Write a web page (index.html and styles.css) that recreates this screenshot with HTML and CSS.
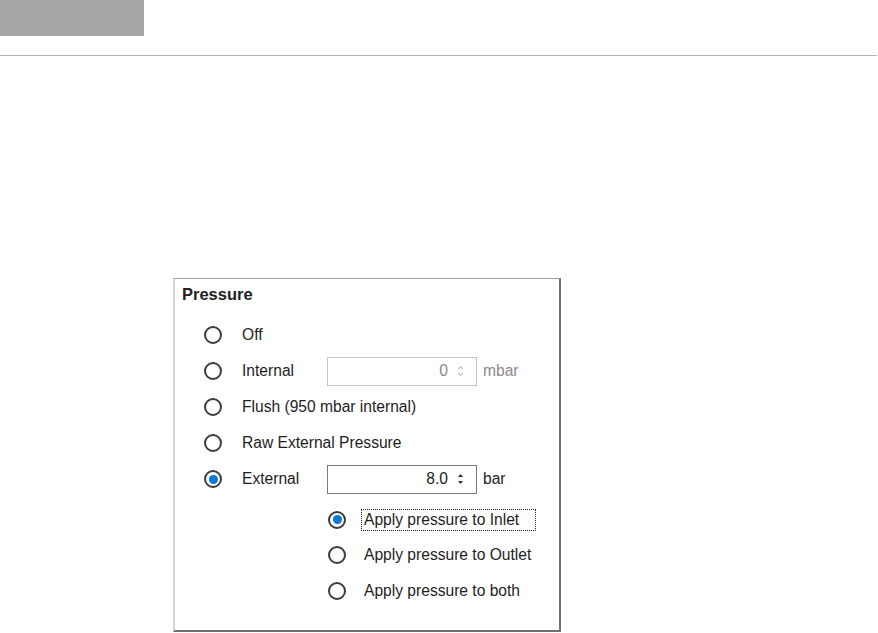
FILE: index.html
```html
<!DOCTYPE html>
<html>
<head>
<meta charset="utf-8">
<link rel="stylesheet" href="styles.css">
</head>
<body>
<div class="topbar"></div>
<div class="rule"></div>
<div class="panel">
  <div class="title">Pressure</div>
  <div class="row">
    <span class="radio"></span><span class="label">Off</span>
  </div>
  <div class="row">
    <span class="radio"></span><span class="label">Internal</span>
    <span class="spin disabled"><span class="val">0</span><span class="arrows"><svg width="7" height="14" viewBox="0 0 7 14"><path d="M1.5 5 L3.5 2.5 L5.5 5" fill="none" stroke="#a8a8a8" stroke-width="1"/><path d="M1.5 9 L3.5 11.5 L5.5 9" fill="none" stroke="#a8a8a8" stroke-width="1"/></svg></span></span>
    <span class="unit disabled-text">mbar</span>
  </div>
  <div class="row">
    <span class="radio"></span><span class="label wide">Flush (950 mbar internal)</span>
  </div>
  <div class="row">
    <span class="radio"></span><span class="label wide">Raw External Pressure</span>
  </div>
  <div class="row">
    <span class="radio checked"></span><span class="label">External</span>
    <span class="spin"><span class="val">8.0</span><span class="arrows"><svg width="7" height="14" viewBox="0 0 7 14"><path d="M3.5 2 L6 5 H1 Z" fill="#333"/><path d="M3.5 12 L6 9 H1 Z" fill="#333"/></svg></span></span>
    <span class="unit">bar</span>
  </div>
  <div class="sub">
    <div class="row subrow">
      <span class="radio checked"></span><span class="label wide focus">Apply pressure to Inlet</span>
    </div>
    <div class="row subrow">
      <span class="radio"></span><span class="label wide">Apply pressure to Outlet</span>
    </div>
    <div class="row subrow">
      <span class="radio"></span><span class="label wide">Apply pressure to both</span>
    </div>
  </div>
</div>
</body>
</html>
```
FILE: styles.css
```css
html, body {
  margin: 0;
  padding: 0;
  background: #ffffff;
}
body {
  width: 878px;
  height: 633px;
  overflow: hidden;
  font-family: "Liberation Sans", Arial, sans-serif;
  color: #1e1e1e;
}
.topbar {
  width: 144px;
  height: 36px;
  background: #a6a6a6;
}
.rule {
  margin-top: 19px;
  width: 877px;
  height: 1px;
  background: #b4b4b4;
}
.panel {
  margin-top: 222px;
  margin-left: 173px;
  width: 384px;
  height: 351px;
  border-top: 1px solid #a0a0a0;
  border-left: 2px solid #d4d4d4;
  border-right: 2px solid #707070;
  border-bottom: 2px solid #707070;
  box-sizing: content-box;
}
.title {
  margin-left: 7px;
  margin-top: 5px;
  height: 20px;
  line-height: 20px;
  font-size: 16.5px;
  font-weight: bold;
  color: #222;
}
.row {
  display: flex;
  align-items: center;
  height: 36px;
  padding-left: 29px;
}
.title + .row {
  margin-top: 13px;
}
.radio {
  flex: none;
  width: 18px;
  height: 18px;
  box-sizing: border-box;
  border: 2px solid #3c3c3c;
  border-radius: 50%;
  background: #fff;
  position: relative;
}
.radio.checked::after {
  content: "";
  position: absolute;
  left: 2.5px;
  top: 2.5px;
  width: 9px;
  height: 9px;
  border-radius: 50%;
  background: #0a78d7;
}
.label {
  margin-left: 20px;
  width: 85px;
  font-size: 15.6px;
  line-height: 20px;
  white-space: nowrap;
}
.label.wide {
  width: auto;
}
.spin {
  width: 150px;
  height: 29px;
  box-sizing: border-box;
  border: 1px solid #7a7a7a;
  display: flex;
  align-items: center;
  justify-content: flex-end;
  padding-right: 12px;
  font-size: 15.6px;
}
.spin.disabled {
  border-color: #c4c4c4;
  color: #8a8a8a;
}
.val {
  margin-right: 9px;
}
.arrows {
  display: flex;
  align-items: center;
}
.arrows svg {
  display: block;
}
.unit {
  margin-left: 6px;
  font-size: 15.6px;
}
.disabled-text {
  color: #8a8a8a;
}
.sub {
  margin-top: 5px;
}
.subrow {
  padding-left: 153px;
  height: 35.5px;
}
.subrow .label {
  margin-left: 18px;
}
.subrow .label.focus {
  margin-left: 16px;
  padding: 0 16px 0 2px;
  outline: 1px dotted #222;
  outline-offset: 0;
}
```
